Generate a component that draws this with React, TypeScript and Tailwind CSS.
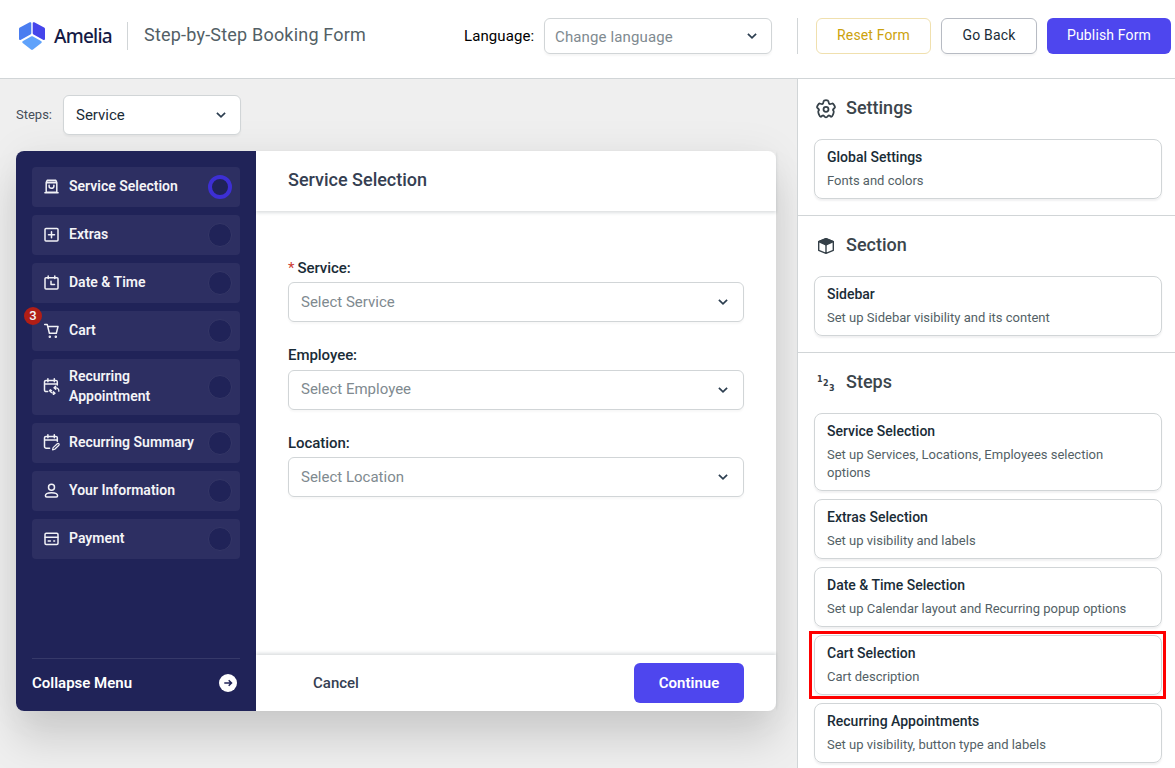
import type { ReactNode } from 'react';
import clsx from 'clsx';

interface StepItem {
  label: string;
  icon: ReactNode;
  active?: boolean;
  badge?: number;
}

interface SettingsCardProps {
  title: string;
  description: string;
  highlighted?: boolean;
}

function StepIcon({ children }: { children: ReactNode }) {
  return (
    <svg
      width="17"
      height="17"
      viewBox="0 0 17 17"
      fill="none"
      stroke="#f1f1f6"
      strokeWidth="1.5"
      strokeLinecap="round"
      strokeLinejoin="round"
      className="-mt-px shrink-0"
    >
      {children}
    </svg>
  );
}

const steps: StepItem[] = [
  {
    label: 'Service Selection',
    active: true,
    icon: (
      <StepIcon>
        <path d="M3.2 4.6 4.2 2.3h8.6l1 2.3v9.6H3.2zM1.9 14.8h13.2M3.4 4.8h10.2" />
        <path d="M3.6 3.8h9.8" opacity=".5" />
        <path d="M6.1 7.3v1c0 2.7 4.8 2.7 4.8 0v-1" />
      </StepIcon>
    ),
  },
  {
    label: 'Extras',
    icon: (
      <StepIcon>
        <rect x="2" y="2.5" width="13" height="12.5" rx="1" />
        <path d="M8.5 5.7v6M5.5 8.7h6" />
      </StepIcon>
    ),
  },
  {
    label: 'Date & Time',
    icon: (
      <StepIcon>
        <rect x="2" y="3.7" width="13" height="11.3" rx="1" />
        <path d="M5.2 2v2.6M11.8 2v2.6M8 7.2v3.4h3.5" />
      </StepIcon>
    ),
  },
  {
    label: 'Cart',
    badge: 3,
    icon: (
      <StepIcon>
        <path d="M1.7 2.4h2.5l2.2 8.9h6.9l1.7-6.7H4.8" />
        <circle cx="6.8" cy="14.7" r=".5" fill="#f1f1f6" />
        <circle cx="12.8" cy="14.7" r=".5" fill="#f1f1f6" />
      </StepIcon>
    ),
  },
  {
    label: 'Recurring Appointment',
    icon: (
      <StepIcon>
        <path d="M4.6 13.6H3.2a1.7 1.7 0 0 1-1.7-1.7V3.9a1.5 1.5 0 0 1 1.5-1.5h9.8a1.5 1.5 0 0 1 1.5 1.5v3M1.5 6h12.8M4.9.8v3M11.3.8v3" />
        <path
          d="M15.8 13.2c.3-2.2-1.4-3.6-4.4-3.5M12.7 8.2 11 9.7l1.7 1.6M7.3 12.1c-.2 2.2 1.4 3.3 4.4 3.1M10.4 13.7l1.6 1.5-1.6 1.3M6.4 12.9l1-1.2 1.2 1"
          strokeWidth="1.3"
        />
      </StepIcon>
    ),
  },
  {
    label: 'Recurring Summary',
    icon: (
      <StepIcon>
        <path d="M6.6 14.2H3.2a1.7 1.7 0 0 1-1.7-1.7V3.9a1.5 1.5 0 0 1 1.5-1.5h9.8a1.5 1.5 0 0 1 1.5 1.5v3.3M1.5 6h12.8M4.9.8v3M11.3.8v3" />
        <path d="m9.6 15.9.5-2.3 4.2-3.9c1-.8 2.4.4 1.6 1.5l-4.2 4z" strokeWidth="1.2" />
      </StepIcon>
    ),
  },
  {
    label: 'Your Information',
    icon: (
      <StepIcon>
        <circle cx="8.5" cy="5.2" r="3" />
        <path d="M2.4 13.8c0-4.2 12.2-4.2 12.2 0 0 .8-.4 1.2-1.2 1.2H3.6c-.8 0-1.2-.4-1.2-1.2z" />
      </StepIcon>
    ),
  },
  {
    label: 'Payment',
    icon: (
      <StepIcon>
        <rect x="2" y="3.2" width="13" height="11.3" rx="1.2" />
        <path d="M2.2 7.2h12.6M5.2 10.9h2.2M10.8 10.9h.8" />
      </StepIcon>
    ),
  },
];

const fields = [
  { label: 'Service:', placeholder: 'Select Service', required: true },
  { label: 'Employee:', placeholder: 'Select Employee', required: false },
  { label: 'Location:', placeholder: 'Select Location', required: false },
];

const stepCards: SettingsCardProps[] = [
  { title: 'Service Selection', description: 'Set up Services, Locations, Employees selection options' },
  { title: 'Extras Selection', description: 'Set up visibility and labels' },
  { title: 'Date & Time Selection', description: 'Set up Calendar layout and Recurring popup options' },
  { title: 'Cart Selection', description: 'Cart description', highlighted: true },
  { title: 'Recurring Appointments', description: 'Set up visibility, button type and labels' },
];

function Chevron() {
  return (
    <svg width="10" height="6" viewBox="0 0 10 6" fill="none" stroke="#2c3e50" strokeWidth="1.7" className="shrink-0">
      <path d="M.9.8 5 4.8 9.1.8" />
    </svg>
  );
}

function Logo() {
  return (
    <svg width="26" height="28" viewBox="0 0 26 28" className="shrink-0">
      <path d="M10.7.3c.8-.4 1.6 0 1.6.8v10c0 .7-.3 1.2-.9 1.5L2 17.7c-1 .5-2 .1-2-1V7.1C0 6.4.3 5.9.9 5.6z" fill="#4a7df0" />
      <path d="M15.3.3c-.8-.4-1.6 0-1.6.8v10c0 .7.3 1.2.9 1.5L24 17.7c1 .5 2 .1 2-1V7.1c0-.7-.3-1.2-.9-1.5z" fill="#4545eb" />
      <path d="M12 14.6c.7-.4 1.3-.4 2 0l8 4.5c1 .6 1 1.6 0 2.2l-8 6.2c-.7.5-1.3.5-2 0l-8-6.2c-1-.6-1-1.6 0-2.2z" fill="#5fa2fb" />
    </svg>
  );
}

function Header() {
  return (
    <header className="flex h-[79px] shrink-0 items-start border-b border-[#d1d5d7] bg-white pt-[18px] pl-[19px]">
      <div className="flex h-9 w-[445px] items-center">
        <Logo />
        <span className="ml-2 w-[65px] pl-px font-['Noto_Sans'] text-[19px] font-medium tracking-[-0.75px] text-[#151a45]">
          Amelia
        </span>
        <div className="ml-[9px] h-7 w-px bg-[#d1d5d7]" />
        <h1 className="ml-4 pb-[3px] text-[18px] tracking-[0.2px] whitespace-nowrap text-[#535f66]">Step-by-Step Booking Form</h1>
      </div>
      <div className="flex h-9 items-center">
        <span className="w-20 text-[15px] tracking-[0.1px] text-black">Language:</span>
        <div className="flex h-9 w-[228px] items-center justify-between rounded-md border border-[#d1d5d7] pr-[14px] pl-2.5 text-[15px] text-[#808a90] shadow-[0_2px_2px_rgba(14,25,32,0.04)]">
          <span className="pt-0.5 tracking-[0.13px]">Change language</span>
          <Chevron />
        </div>
        <div className="ml-[25px] h-9 w-px bg-[#d1d5d7]" />
      </div>
      <div className="ml-[18px] flex gap-2.5 text-[14px] tracking-[0.15px]">
        <button className="h-9 w-[115px] rounded-md border border-[#f0e0ae] pb-0.5 text-[#cca20c]">Reset Form</button>
        <button className="h-9 w-24 rounded-md border border-[#b7bbc3] pb-0.5 text-[#1a2c37] shadow-[0_2px_2px_rgba(14,25,32,0.04)]">
          Go Back
        </button>
        <button className="h-9 w-[124px] rounded-md bg-[#4e46ee] pb-0.5 text-white">Publish Form</button>
      </div>
    </header>
  );
}

function StepsMenu() {
  return (
    <aside className="flex w-60 shrink-0 flex-col rounded-l-lg bg-[#202358] px-4 pt-4">
      <ul className="flex flex-col gap-2">
        {steps.map((step) => (
          <li
            key={step.label}
            className="relative flex min-h-10 items-center rounded bg-[#2d2f62] pr-2 pl-[11px] text-[#f4f4f7]"
          >
            {step.icon}
            <span className="ml-[9px] w-[130px] pt-[7px] pb-[9px] text-[14px]/5 font-semibold">{step.label}</span>
            <span
              className={clsx(
                'ml-auto size-6 shrink-0 rounded-full bg-[#202358]',
                step.active ? 'border-4 border-[#3d2fd3]' : 'border border-[#353767]'
              )}
            />
            {step.badge && (
              <span className="absolute -top-1 -left-2 flex size-[18px] items-center justify-center rounded-full bg-[#b11e16] text-[13px] font-medium">
                {step.badge}
              </span>
            )}
          </li>
        ))}
      </ul>
      <div className="mt-auto flex h-[53px] items-center justify-between border-t border-[#363969] pr-[3px] pb-1 text-[15px] font-semibold text-white">
        <span>Collapse Menu</span>
        <svg width="18" height="18" viewBox="0 0 18 18" fill="none">
          <circle cx="9" cy="9" r="9" fill="#fff" />
          <path d="M5.3 9h7.2M9.7 6.3 12.5 9l-2.8 2.7" stroke="#202358" strokeWidth="1.5" />
        </svg>
      </div>
    </aside>
  );
}

function BookingForm() {
  return (
    <div className="flex h-[560px] w-[760px] rounded-lg bg-white shadow-[0_30px_40px_rgba(0,0,0,0.13),0_0_40px_rgba(0,0,0,0.06)]">
      <StepsMenu />
      <section className="flex flex-1 flex-col">
        <div className="flex h-[60px] items-center px-8 pb-[3px] text-[18px] font-medium text-[#354052] shadow-[0_2px_3px_rgba(26,44,55,0.15)]">
          Service Selection
        </div>
        <div className="flex flex-1 flex-col gap-[24.25px] px-8 pt-[47.75px]">
          {fields.map((field) => (
            <div key={field.label}>
              <div className="mb-[4.25px] h-[19px] text-[15px]/[19px] font-medium tracking-[-0.05px] text-[#1a2c37]">
                {field.required && <span className="mr-[3px] font-normal text-[#cc3c34]">*</span>}
                {field.label}
              </div>
              <div className="flex h-10 items-center justify-between rounded-md border border-[#d1d5d7] pr-[15px] pl-3 text-[15px] text-[#808a90] shadow-[0_2px_2px_rgba(14,25,32,0.03)]">
                <span>{field.placeholder}</span>
                <Chevron />
              </div>
            </div>
          ))}
        </div>
        <div className="flex h-14 items-center justify-between px-8 text-[15px] shadow-[0_-2px_3px_rgba(26,44,55,0.15)]">
          <button className="w-24 text-center font-medium text-[#354052]">Cancel</button>
          <button className="h-10 w-[110px] rounded-md bg-[#4e46ee] font-semibold text-white">Continue</button>
        </div>
      </section>
    </div>
  );
}

function SettingsCard({ title, description, highlighted }: SettingsCardProps) {
  return (
    <div className="relative rounded-lg border border-[#d1d5d7] px-3 pt-[7px] pb-2 shadow-[0_2px_2px_rgba(14,25,32,0.06)]">
      <div className="text-[14px]/5 font-medium text-[#1a2c37]">{title}</div>
      <div className="mt-[5px] text-[13px]/[18px] text-[#535f66]">{description}</div>
      {highlighted && (
        <div className="pointer-events-none absolute -top-[5px] -right-[5px] -bottom-[5px] -left-1.5 border-3 border-[#fe0000]" />
      )}
    </div>
  );
}

interface SettingsGroupProps {
  title: string;
  icon: ReactNode;
  children: ReactNode;
}

function SettingsGroup({ title, icon, children }: SettingsGroupProps) {
  return (
    <section className="border-b border-[#d1d5d7] pr-[13px] pb-4 pl-4">
      <div className="flex h-[60px] items-center pb-0.5 pl-0.5">
        <span className="flex size-5 items-center justify-center pt-0.5">{icon}</span>
        <h2 className="ml-2.5 pb-0.5 text-[18px] font-medium text-[#3b454c]">{title}</h2>
      </div>
      <div className="flex flex-col gap-2">{children}</div>
    </section>
  );
}

function SettingsPanel() {
  return (
    <aside className="w-[378px] shrink-0 overflow-hidden border-l border-[#d1d5d7] bg-white">
      <SettingsGroup
        title="Settings"
        icon={
          <svg width="20" height="20" viewBox="0 0 20 20" fill="none" stroke="#354048" strokeWidth="1.8" strokeLinejoin="round">
            <path d="M7.6 2.2c.3-1.4 4.5-1.4 4.8 0l.5 1.9c.3.8.9 1.1 1.7.9l1.7-.5c1-.2 3.2 3.4 2.5 4.2l-1.3 1.3c-.6.6-.6 1.2 0 1.8.8 1.1-1 6.3-2.6 5.9l-1.1-.9c-.6-.4-1.2-.4-1.7.1l-1 1c-.6.5-1.6.5-2.2 0l-1-1c-.5-.5-1.1-.5-1.7-.1l-1.1.9c-1.6.4-3.4-4.8-2.6-5.9.6-.6.6-1.2 0-1.8L1.2 8.7C.5 7.9 2.7 4.3 3.7 4.5l1.7.5c.8.2 1.4-.1 1.7-.9z" />
            <circle cx="10" cy="10.3" r="2.5" />
          </svg>
        }
      >
        <SettingsCard title="Global Settings" description="Fonts and colors" />
      </SettingsGroup>
      <SettingsGroup
        title="Section"
        icon={
          <svg width="16" height="16" viewBox="0 0 16 16" fill="none" stroke="#354048" strokeWidth="1.4" strokeLinejoin="round">
            <path d="M.7 3.7 8 .7l7.3 3v8.6l-7.3 3-7.3-3zM8 6.7v8.6" />
            <path d="M.7 3.7 8 .7l7.3 3L8 6.9z" fill="#354048" />
          </svg>
        }
      >
        <SettingsCard title="Sidebar" description="Set up Sidebar visibility and its content" />
      </SettingsGroup>
      <SettingsGroup
        title="Steps"
        icon={
          <svg width="18" height="18" viewBox="0 0 18 18" fill="#354048" className="font-['DejaVu_Sans'] text-[8px] font-bold">
            <text x="0" y="8">1</text>
            <text x="6" y="12">2</text>
            <text x="12" y="17">3</text>
          </svg>
        }
      >
        {stepCards.map((card) => (
          <SettingsCard key={card.title} {...card} />
        ))}
      </SettingsGroup>
    </aside>
  );
}

export default function App() {
  return (
    <div className="flex h-[768px] w-[1175px] flex-col overflow-hidden bg-[#efefef] font-[Roboto,sans-serif]">
      <Header />
      <div className="flex min-h-0 flex-1">
        <main className="flex-1 overflow-hidden pt-4 pl-4">
          <div className="mb-4 flex items-center">
            <span className="w-[47px] text-[13px] text-[#454d58]">Steps:</span>
            <div className="flex h-10 w-[178px] items-center justify-between rounded-md border border-[#d1d5d7] bg-white pr-[14px] pl-3 text-[15px] text-[#1a2c37] shadow-[0_2px_2px_rgba(14,25,32,0.04)]">
              Service
              <Chevron />
            </div>
          </div>
          <BookingForm />
        </main>
        <SettingsPanel />
      </div>
    </div>
  );
}
